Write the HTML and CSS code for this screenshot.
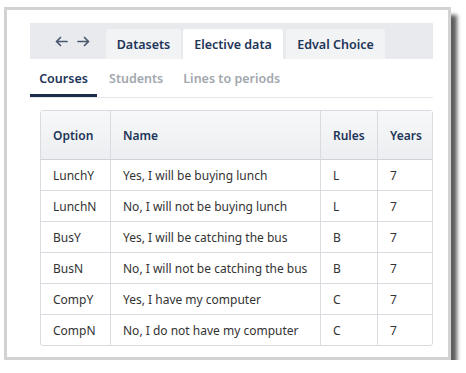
FILE: index.html
```html
<!DOCTYPE html>
<html>
<head>
<meta charset="utf-8">
<link rel="stylesheet" href="styles.css">
</head>
<body>
<div class="frame">
  <div class="tabbar">
    <div class="arrows">
      <svg class="arrow" width="13" height="11" viewBox="0 0 13 11"><path d="M12 5.5H1.5M5.5 1.5L1.5 5.5L5.5 9.5" fill="none" stroke="#4a5870" stroke-width="1.7" stroke-linecap="round" stroke-linejoin="round"/></svg>
      <svg class="arrow" width="13" height="11" viewBox="0 0 13 11"><path d="M1 5.5H11.5M7.5 1.5L11.5 5.5L7.5 9.5" fill="none" stroke="#4a5870" stroke-width="1.7" stroke-linecap="round" stroke-linejoin="round"/></svg>
    </div>
    <div class="tab">Datasets</div>
    <div class="tab active">Elective data</div>
    <div class="tab">Edval Choice</div>
  </div>
  <div class="subtabs">
    <div class="subtab active">Courses</div>
    <div class="subtab">Students</div>
    <div class="subtab">Lines to periods</div>
  </div>
  <div class="tablewrap">
    <table class="grid">
      <thead>
        <tr><th class="c-opt">Option</th><th class="c-name">Name</th><th class="c-rules">Rules</th><th class="c-years">Years</th></tr>
      </thead>
      <tbody>
        <tr><td>LunchY</td><td>Yes, I will be buying lunch</td><td>L</td><td>7</td></tr>
        <tr><td>LunchN</td><td>No, I will not be buying lunch</td><td>L</td><td>7</td></tr>
        <tr><td>BusY</td><td>Yes, I will be catching the bus</td><td>B</td><td>7</td></tr>
        <tr><td>BusN</td><td>No, I will not be catching the bus</td><td>B</td><td>7</td></tr>
        <tr><td>CompY</td><td>Yes, I have my computer</td><td>C</td><td>7</td></tr>
        <tr><td>CompN</td><td>No, I do not have my computer</td><td>C</td><td>7</td></tr>
      </tbody>
    </table>
  </div>
</div>
</body>
</html>
```

FILE: styles.css
```css
html, body { margin: 0; padding: 0; background: #ffffff; }
body { font-family: "Noto Sans", "Open Sans", sans-serif; }

.frame {
  box-sizing: border-box;
  margin: 7px 0 0 4px;
  width: 447px;
  height: 353px;
  border: 3px solid #d2d2d2;
  background: #ffffff;
  box-shadow: 6px 8px 4px #5e5e5e;
  padding: 13px 15px 0 23px;
}

.tabbar {
  display: flex;
  align-items: flex-end;
  height: 36px;
  background: #e8eaed;
}
.arrows {
  display: flex;
  align-items: center;
  align-self: center;
  gap: 9px;
  padding: 0 16px 0 25px;
  width: 35px;
}
.arrow { display: block; flex: none; }
.tab {
  box-sizing: border-box;
  height: 30px;
  display: flex;
  align-items: center;
  justify-content: center;
  background: #f2f3f5;
  color: #1d3558;
  font-weight: 600;
  font-size: 12.5px;
  border-radius: 3px 3px 0 0;
  margin-right: 2px;
}
.tab:nth-child(2) { width: 75px; }
.tab:nth-child(3) { width: 100px; }
.tab:nth-child(4) { width: 99px; margin-left: 1px; }
.tab.active { background: #ffffff; }

.subtabs {
  display: flex;
  height: 38px;
  border-bottom: 1px solid #e6e8eb;
}
.subtab {
  box-sizing: border-box;
  padding: 0 8px;
  display: flex;
  align-items: center;
  color: #a2a7ae;
  font-weight: 600;
  font-size: 12.5px;
  margin-right: 4px;
}
.subtab.active {
  color: #1d3558;
  border-bottom: 3px solid #1c2d4b;
  width: 67px;
  justify-content: center;
  padding: 3px 0 0 0;
}

.tablewrap { padding: 12px 0 0 10px; }
.grid {
  width: 393px;
  border-collapse: separate;
  border-spacing: 0;
  border: 1px solid #d8dbdf;
  border-radius: 3px;
  font-size: 12px;
  color: #333333;
}
.grid th, .grid td {
  text-align: left;
  padding: 0 0 0 12px;
  border-right: 1px solid #d8dbdf;
  border-bottom: 1px solid #d8dbdf;
}
.grid th:last-child, .grid td:last-child { border-right: none; }
.grid tbody tr:last-child td { border-bottom: none; }
.grid th {
  height: 48px;
  font-weight: 600;
  color: #1d3558;
  font-size: 12px;
  background: linear-gradient(#f7f8f9, #eceef1);
  border-bottom-color: #cfd3d8;
}
.grid td { height: 30px; }
.c-opt { width: 57px; }
.c-name { width: 197px; }
.c-rules { width: 44px; }
```
